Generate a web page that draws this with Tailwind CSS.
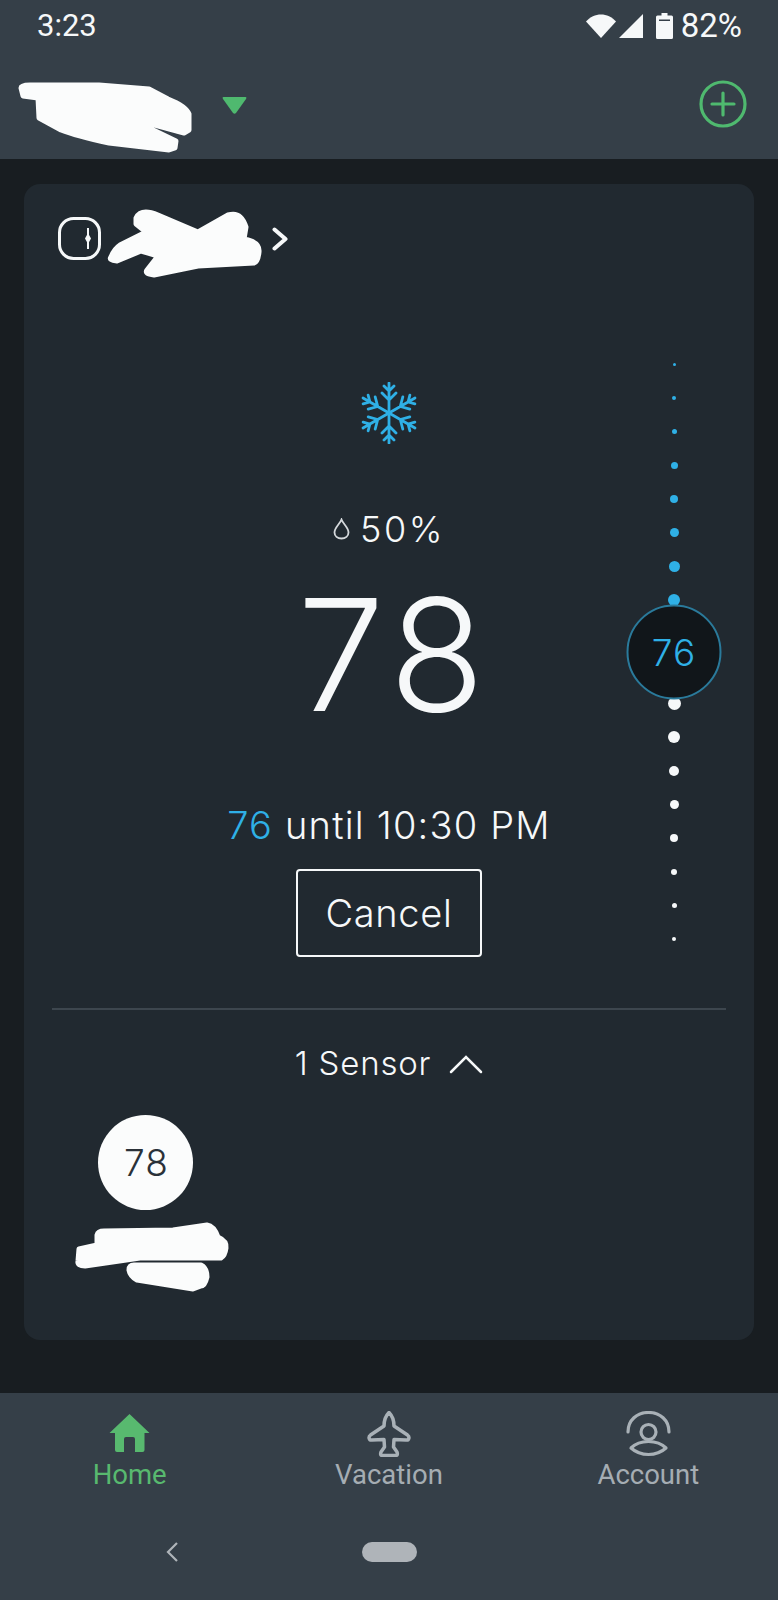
<!DOCTYPE html>
<html lang="en">
<head>
  <meta charset="UTF-8" />
  <meta name="viewport" content="width=device-width, initial-scale=1.0" />
  <title>Thermostat</title>
  <script src="https://cdn.jsdelivr.net/npm/@tailwindcss/browser@4"></script>
</head>
<body class="bg-[#181d21]">
<div class="w-[778px] h-[1600px] flex flex-col text-[#f6f8f9] font-['Inter',sans-serif] overflow-hidden">

  <!-- status bar + title -->
  <header class="h-[159px] bg-[#353f48] shrink-0">
    <div class="h-[52px] flex items-center pl-[37px] pr-[36px] font-['Roboto',sans-serif] text-[31px]">
      <span>3:23</span>
      <div class="ml-auto flex items-center">
        <svg class="w-[30px] h-[24px]" viewBox="0 0 30 24"><path fill="#f6f8f9" d="M0 7.500C8-2 22-2 30 7.500L15 24Z"/></svg>
        <svg class="ml-[3px] w-[24px] h-[24px]" viewBox="0 0 24 24"><path fill="#f6f8f9" d="M24 0V24H0Z"/></svg>
        <svg class="ml-[13px] w-[17px] h-[26px]" viewBox="0 0 17 26"><path fill="#f6f8f9" fill-rule="evenodd" d="M5.500 0H11.500V2.500H15.500Q17 2.500 17 4V24.500Q17 26 15.500 26H1.500Q0 26 0 24.500V4Q0 2.500 1.500 2.500H5.500ZM3 6.500V8H14V6.500Z"/></svg>
        <span class="ml-[8px] text-[33px]">82%</span>
      </div>
    </div>
    <div class="h-[107px] flex items-start pl-[18px] pr-[31px]">
      <svg class="mt-[31px] w-[175px] h-[71px] overflow-visible" viewBox="18 83 175 71"><path fill="#fbfcfc" stroke="#fbfcfc" stroke-width="5" stroke-linejoin="round" d="M21 88Q21 85 30 85L99 85L149 89L168 99Q186 106 189 114L189 130L184 133L151 124L147 127L176 141L175 148L169 150L109 143Q76 136 61 130L39 118L38 98L23 96Z"/></svg>
      <svg class="ml-[29px] mt-[45px] w-[25px] h-[17px]" viewBox="0 0 25 17"><path fill="#4fb96f" d="M1.500 0H23.500Q25 0 24 2L14 16Q12.500 17.500 11 16L1 2Q0 0 1.500 0Z"/></svg>
      <svg class="ml-auto mt-[28px] w-[48px] h-[48px]" viewBox="0 0 48 48" fill="none" stroke="#4fb96f" stroke-width="3.200" stroke-linecap="round"><circle cx="24" cy="24" r="22"/><path d="M24 13V35M13 24H35"/></svg>
    </div>
  </header>

  <main class="flex-1 px-6 pt-[25px] pb-[53px] flex">
    <section class="flex-1 bg-[#212930] rounded-[16px] flex flex-col">

      <div class="pt-[33px] pl-[34px] h-[76px] flex items-start">
        <svg class="w-[43px] h-[43px]" viewBox="0 0 43 43" fill="none" stroke="#f6f8f9" stroke-width="3"><rect x="1.500" y="1.500" width="40" height="40" rx="14"/><path d="M30 11V32" stroke-width="2"/><path d="M30 16L33 21.500L30 27L27 21.500Z" fill="#f6f8f9" stroke="none"/></svg>
        <svg class="ml-[8px] -mt-[9px] w-[152px] h-[69px] overflow-visible" viewBox="109 208 152 69"><path fill="#fbfcfc" stroke="#fbfcfc" stroke-width="5" stroke-linejoin="round" d="M136 218Q141 208 158 215L198 232L228 215Q241 211 246 227L244 239Q260 242 259 252Q258 262 254 263L198 266L154 275Q144 274 147 270L158 256L141 251L117 261Q108 260 111 257Q114 249 120 245L146 232L136 224Z"/></svg>
        <svg class="ml-[11px] mt-[10px] w-[16px] h-[24px]" viewBox="0 0 16 24" fill="none" stroke="#f6f8f9" stroke-width="4" stroke-linecap="round" stroke-linejoin="round"><path d="M2.500 2.500L13.500 12L2.500 21.500"/></svg>
      </div>

      <div class="grid grid-cols-[160px_1fr_160px]">
        <div></div>
        <div class="flex flex-col items-center">
          <svg class="mt-[122px] w-[60px] h-[62px]" viewBox="-30 -31 60 62" fill="none" stroke="#2fb0e6" stroke-width="2.800" stroke-linecap="round" stroke-linejoin="round">
            <g><path d="M0 0V-30M-5-27L0-22L5-27M-7-20L0-13L7-20"/></g>
            <g transform="rotate(60)"><path d="M0 0V-30M-5-27L0-22L5-27M-7-20L0-13L7-20"/></g>
            <g transform="rotate(120)"><path d="M0 0V-30M-5-27L0-22L5-27M-7-20L0-13L7-20"/></g>
            <g transform="rotate(180)"><path d="M0 0V-30M-5-27L0-22L5-27M-7-20L0-13L7-20"/></g>
            <g transform="rotate(240)"><path d="M0 0V-30M-5-27L0-22L5-27M-7-20L0-13L7-20"/></g>
            <g transform="rotate(300)"><path d="M0 0V-30M-5-27L0-22L5-27M-7-20L0-13L7-20"/></g>
          </svg>
          <div class="mt-[65px] h-[40px] flex items-center gap-[10px] text-[36px] tracking-[2.500px] font-light leading-[40px]">
            <svg class="w-[17px] h-[22px]" viewBox="0 0 17 22" fill="none" stroke="#d5d9dc" stroke-width="1.800"><path d="M8.500 1.500C7 6 1.500 9.500 1.500 14.500C1.500 18 4.500 20.500 8.500 20.500C12.500 20.500 15.500 18 15.500 14.500C15.500 9.500 10 6 8.500 1.500Z"/></svg>
            <span>50%</span>
          </div>
          <div class="mt-[26px] ml-[11px] h-[160px] text-[156px] tracking-[7px] leading-[160px] font-[350]">78</div>
          <div class="mt-[68px] h-[44px] text-[38px] tracking-[1.200px] leading-[44px] font-light whitespace-nowrap"><span class="text-[#2fb0e6]">76</span> until 10:30 PM</div>
          <button class="mt-[22px] w-[186px] h-[88px] pt-[1px] border-2 border-[#f6f8f9] rounded-[4px] text-[38px] tracking-[0.700px] font-light">Cancel</button>
        </div>
        <div class="mt-[87.500px] flex flex-col items-center">
          <div class="h-[33.700px] flex items-center"><span class="block w-[3px] h-[3px] rounded-full bg-[#2fb0e6]"></span></div>
          <div class="h-[33.700px] flex items-center"><span class="block w-[4px] h-[4px] rounded-full bg-[#2fb0e6]"></span></div>
          <div class="h-[33.700px] flex items-center"><span class="block w-[5px] h-[5px] rounded-full bg-[#2fb0e6]"></span></div>
          <div class="h-[33.700px] flex items-center"><span class="block w-[7px] h-[7px] rounded-full bg-[#2fb0e6]"></span></div>
          <div class="h-[33.700px] flex items-center"><span class="block w-[8px] h-[8px] rounded-full bg-[#2fb0e6]"></span></div>
          <div class="h-[33.700px] flex items-center"><span class="block w-[9px] h-[9px] rounded-full bg-[#2fb0e6]"></span></div>
          <div class="h-[33.700px] flex items-center"><span class="block w-[11px] h-[11px] rounded-full bg-[#2fb0e6]"></span></div>
          <div class="h-[33.700px] flex items-center"><span class="block w-[12px] h-[12px] rounded-full bg-[#2fb0e6]"></span></div>
          <div class="relative h-[69.300px] w-full">
            <div class="absolute z-10 left-1/2 top-1/2 -translate-x-1/2 -translate-y-1/2 w-[95px] h-[95px] pt-[2px] rounded-full bg-[#11161a] border-2 border-[#2a7a9b] flex items-center justify-center text-[#2fb0e6] text-[37px] tracking-[1px] font-light">76</div>
          </div>
          <div class="h-[33.700px] flex items-center"><span class="block w-[13px] h-[13px] rounded-full bg-[#f6f8f9]"></span></div>
          <div class="h-[33.700px] flex items-center"><span class="block w-[12px] h-[12px] rounded-full bg-[#f6f8f9]"></span></div>
          <div class="h-[33.700px] flex items-center"><span class="block w-[10px] h-[10px] rounded-full bg-[#f6f8f9]"></span></div>
          <div class="h-[33.700px] flex items-center"><span class="block w-[9px] h-[9px] rounded-full bg-[#f6f8f9]"></span></div>
          <div class="h-[33.700px] flex items-center"><span class="block w-[8px] h-[8px] rounded-full bg-[#f6f8f9]"></span></div>
          <div class="h-[33.700px] flex items-center"><span class="block w-[6px] h-[6px] rounded-full bg-[#f6f8f9]"></span></div>
          <div class="h-[33.700px] flex items-center"><span class="block w-[5px] h-[5px] rounded-full bg-[#f6f8f9]"></span></div>
          <div class="h-[33.700px] flex items-center"><span class="block w-[4px] h-[4px] rounded-full bg-[#f6f8f9]"></span></div>
        </div>
      </div>

      <div class="mx-[28px] mt-[51px] h-[2px] bg-[#3d464e]"></div>

      <div class="mt-[34px] h-[40px] flex items-center justify-center gap-[18px] text-[33px] tracking-[0.800px] font-light">
        <span>1 Sensor</span>
        <svg class="w-[34px] h-[20px]" viewBox="0 0 34 20" fill="none" stroke="#f6f8f9" stroke-width="2.500" stroke-linecap="round"><path d="M2 18L17 3L32 18"/></svg>
      </div>

      <div class="mt-[31px] ml-[74px] w-[95px] h-[95px] pl-[2px] rounded-full bg-[#fbfcfc] flex items-center justify-center text-[#2a3138] text-[37px] tracking-[1px] font-light">78</div>
      <svg class="mt-[13px] ml-[52px] w-[153px] h-[69px] overflow-visible" viewBox="76 1223 153 69"><path fill="#fbfcfc" stroke="#fbfcfc" stroke-width="5" stroke-linejoin="round" d="M97 1235Q98 1231 104 1231L173 1230L207 1225Q214 1226 218 1237Q227 1241 226 1248Q225 1256 221 1258L140 1258L85 1266Q77 1266 78 1261L79 1249L97 1245Z"/><path fill="#fbfcfc" stroke="#fbfcfc" stroke-width="5" stroke-linejoin="round" d="M129 1270Q129 1265 134 1265L201 1265Q207 1268 207 1277Q205 1286 201 1286L193 1289L137 1280Q130 1276 129 1270Z"/></svg>
    </section>
  </main>

  <!-- bottom navigation -->
  <nav class="h-[207px] bg-[#353f48] shrink-0 font-['Roboto',sans-serif] text-[27.500px] text-[#a5adb3]">
    <div class="pt-[18px] grid grid-cols-3">
      <div class="flex flex-col items-center text-[#58b96f]">
        <div class="h-[46px] flex items-end pb-[5px]">
          <svg class="w-[41px] h-[38px]" viewBox="0 0 41 38"><path fill="#58b96f" fill-rule="evenodd" d="M20.500 0L40.500 19H35.500V36Q35.500 38 33.500 38H8Q6 38 6 36V19H0.500ZM15 38H26V25Q26 23 24 23H17Q15 23 15 25Z"/></svg>
        </div>
        <span class="mt-[3px] h-[30px] leading-[30px]">Home</span>
      </div>
      <div class="flex flex-col items-center">
        <svg class="w-[44px] h-[46px]" viewBox="0 0 44 46" fill="none" stroke="#a9b1b7" stroke-width="3.500" stroke-linejoin="round"><path d="M22 1.500C18.500 5 17 10 17 15L3.500 24C1 26 2 29.500 5 29L17 28.500L17.500 36L14 41C13 44 14 44.500 16 44.500H28C30 44.500 31 44 30 41L26.500 36L27 28.500L39 29C42 29.500 43 26 40.500 24L27 15C27 10 25.500 5 22 1.500Z"/></svg>
        <span class="mt-[3px] h-[30px] leading-[30px]">Vacation</span>
      </div>
      <div class="flex flex-col items-center">
        <svg class="w-[45px] h-[46px]" viewBox="0 0 45 46" fill="none" stroke="#a9b1b7" stroke-width="3.200" stroke-linecap="round" stroke-linejoin="round"><path d="M2 21C2 9 11 1.500 22.500 1.500C34 1.500 43 9 43 21"/><ellipse cx="22.500" cy="21" rx="7.500" ry="7.500"/><path d="M5 37C10 32 16 30.500 22.500 30.500C29 30.500 35 32 40 37C35 41.500 29 43.500 22.500 43.500C16 43.500 10 41.500 5 37Z"/></svg>
        <span class="mt-[3px] h-[30px] leading-[30px]">Account</span>
      </div>
    </div>
    <div class="mt-[52px] h-[20px] flex items-center pl-[166px]">
      <svg class="w-[12px] h-[20px]" viewBox="0 0 12 20" fill="none" stroke="#afb4b9" stroke-width="2.200"><path d="M11 1L2 10L11 19"/></svg>
      <div class="ml-[184px] w-[55px] h-[20px] rounded-full bg-[#afb4b9]"></div>
    </div>
  </nav>
</div>
</body>
</html>
